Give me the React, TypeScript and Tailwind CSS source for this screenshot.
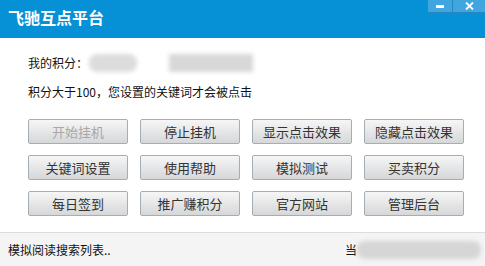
const buttons = [
  { label: "开始挂机", disabled: true },
  { label: "停止挂机" },
  { label: "显示点击效果" },
  { label: "隐藏点击效果" },
  { label: "关键词设置" },
  { label: "使用帮助" },
  { label: "模拟测试" },
  { label: "买卖积分" },
  { label: "每日签到" },
  { label: "推广赚积分" },
  { label: "官方网站" },
  { label: "管理后台" },
];

export default function App() {
  return (
    <div
      className="flex h-[266px] w-[485px] flex-col bg-white text-[12px] text-[#111]"
      style={{ fontFamily: '"Noto Sans CJK SC", "Noto Sans", sans-serif' }}
    >
      {/* title bar */}
      <div className="flex h-[38px] shrink-0 items-start justify-between bg-[#0690d6]">
        <div className="pl-[8px] pt-[6px] text-[16px] font-bold leading-[22px] text-white">飞驰互点平台</div>
        <div className="flex">
          <button className="flex h-[13px] w-[25px] items-center justify-center rounded-bl-[2px] border-b border-l border-[#2a86c0] bg-[#3fa6df]">
            <span className="h-[3px] w-[8px] bg-white" />
          </button>
          <button className="flex h-[13px] w-[33px] items-center justify-center border-b border-l border-[#2a86c0] bg-[#3fa6df]">
            <svg width="9" height="8" viewBox="0 0 9 8">
              <path d="M1 0.5 L8 7.5 M8 0.5 L1 7.5" stroke="white" strokeWidth="1.8" />
            </svg>
          </button>
        </div>
      </div>

      {/* body */}
      <div className="flex-1 px-[28px] pt-[14px]">
        <div className="flex h-[22px] items-center">
          <span>我的积分：</span>
          <span className="ml-[1px] h-[18px] w-[48px] rounded-[8px] bg-[#dcdcdc] blur-[2px]" />
          <span className="ml-[32px] h-[18px] w-[84px] bg-[#d8d8d8] blur-[2px]" />
        </div>
        <div className="mt-[8px] leading-[20px]">积分大于100，您设置的关键词才会被点击</div>

        <div className="mt-[17px] grid w-[436px] grid-cols-4 gap-x-[12px] gap-y-[11px]">
          {buttons.map((b) => (
            <button
              key={b.label}
              className={`h-[25px] rounded-[2px] border border-[#a7aeb3] bg-gradient-to-b from-[#f6f6f6] to-[#d6d7d9] text-[13px] ${
                b.disabled ? "text-[#a8a8a8]" : "text-[#333]"
              }`}
            >
              {b.label}
            </button>
          ))}
        </div>
      </div>

      {/* status bar */}
      <div className="flex h-[34px] shrink-0 items-center justify-between border-t border-[#dcdcdc] bg-[#f4f4f4] pl-[8px]">
        <span>模拟阅读搜索列表..</span>
        <div className="flex items-center">
          <span>当</span>
          <span className="mr-[4px] h-[18px] w-[124px] rounded-[8px] bg-[#d6d6d6] blur-[2px]" />
        </div>
      </div>
    </div>
  );
}
